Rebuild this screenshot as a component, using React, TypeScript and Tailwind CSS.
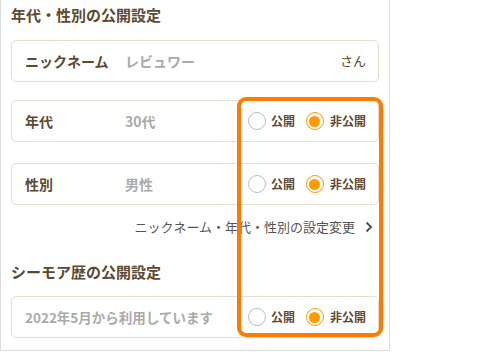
import React from "react";

const Radio = ({ checked }: { checked: boolean }) =>
  checked ? (
    <span className="w-[18px] h-[18px] rounded-full border border-[#ff9a00] flex items-center justify-center bg-white">
      <span className="w-[11px] h-[11px] rounded-full bg-[#ff9a00]" />
    </span>
  ) : (
    <span className="w-[18px] h-[18px] rounded-full border border-[#bdbdbd] bg-white" />
  );

const Toggle = () => (
  <div className="flex items-center">
    <Radio checked={false} />
    <span className="ml-[5px] font-bold text-[12px] text-[#5c4a32]">公開</span>
    <span className="ml-[11px]" />
    <Radio checked={true} />
    <span className="ml-[6px] font-bold text-[12px] text-[#5c4a32]">非公開</span>
  </div>
);

const Row = ({ label, value, mt }: { label: string; value: string; mt: string }) => (
  <div className={`${mt} h-[42px] rounded-[5px] border border-[#e6ddd0] flex items-center pl-[13px] pr-[12px]`}>
    <span className="w-[100px] font-bold text-[14px] text-[#5c4a32]">{label}</span>
    <span className="text-[14px] text-[#aaaaaa] font-bold">{value}</span>
    <div className="ml-auto">
      <Toggle />
    </div>
  </div>
);

export default function App() {
  return (
    <div
      className="w-[480px] h-[353px] bg-white relative"
      style={{ fontFamily: '"Noto Sans CJK JP", "Noto Sans", sans-serif' }}
    >
      <div className="w-[390px] h-[351px] border-l border-r border-b border-[#dddddd] pl-[10px] pr-[10px]">
        <div className="pt-[5px] h-[25px] leading-[20px] font-bold text-[15px] text-[#5c4a32]">
          年代・性別の公開設定
        </div>
        <div className="mt-[15px] h-[42px] rounded-[5px] border border-[#e6ddd0] flex items-center pl-[13px] pr-[12px]">
          <span className="w-[100px] font-bold text-[14px] text-[#5c4a32]">ニックネーム</span>
          <span className="text-[14px] text-[#aaaaaa] font-bold">レビュワー</span>
          <span className="ml-auto text-[13px] text-[#5c4a32]">さん</span>
        </div>
        <Row label="年代" value="30代" mt="mt-[18px]" />
        <Row label="性別" value="男性" mt="mt-[21px]" />
        <div className="mt-[12px] h-[20px] flex items-center justify-end pr-[6px] text-[13px] text-[#555555]">
          <span>ニックネーム・年代・性別の設定変更</span>
          <svg className="ml-[10px]" width="8" height="12" viewBox="0 0 8 12">
            <path d="M1.5 1.5 L6 6 L1.5 10.5" fill="none" stroke="#555" strokeWidth="2" />
          </svg>
        </div>
        <div className="mt-[25px] h-[20px] leading-[20px] font-bold text-[15px] text-[#5c4a32]">
          シーモア歴の公開設定
        </div>
        <div className="mt-[14px] h-[42px] rounded-[5px] border border-[#e6ddd0] flex items-center pl-[13px] pr-[12px]">
          <span className="text-[13.5px] text-[#aaaaaa] font-bold">2022年5月から利用しています</span>
          <div className="ml-auto">
            <Toggle />
          </div>
        </div>
      </div>
      <div className="absolute left-[237px] top-[97px] w-[146px] h-[240px] rounded-[9px] border-[4px] border-[#ff7a00] pointer-events-none" />
    </div>
  );
}
